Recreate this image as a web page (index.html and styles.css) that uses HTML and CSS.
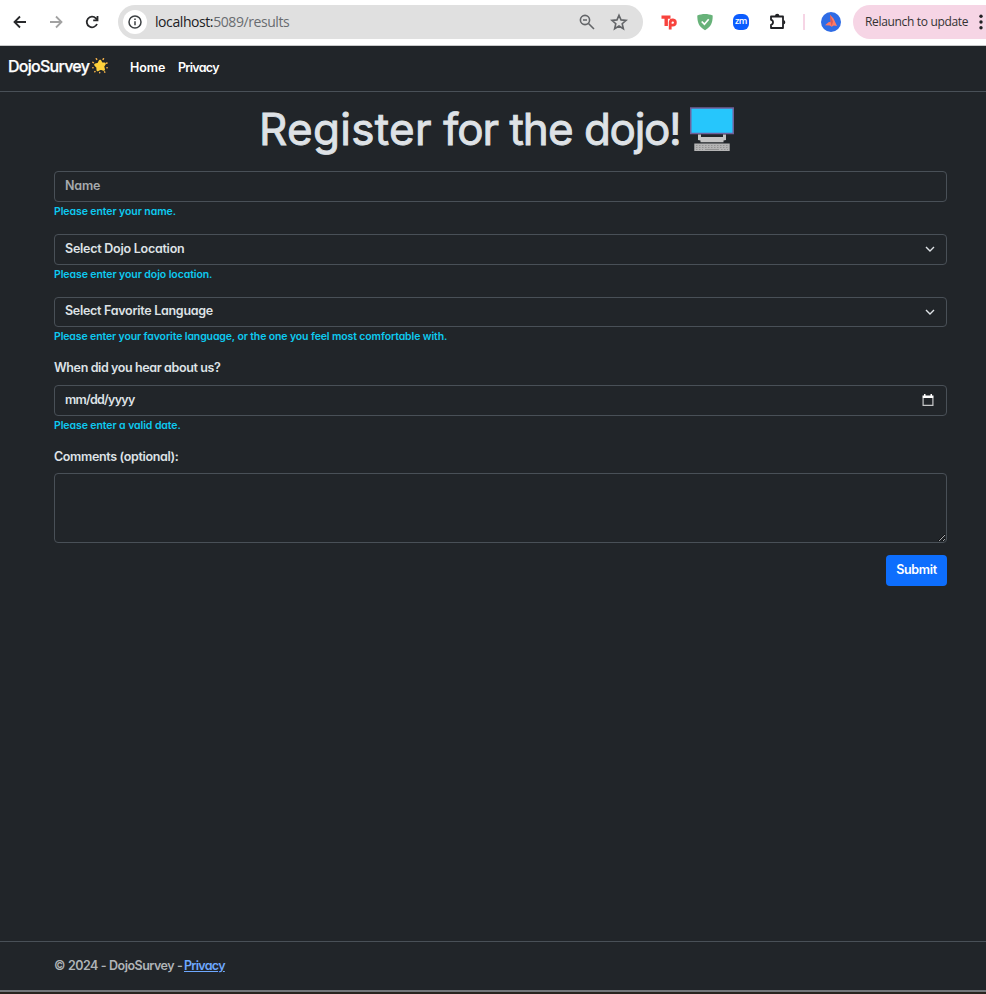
FILE: index.html
```html
<!DOCTYPE html>
<html lang="en">
<head>
<meta charset="utf-8">
<title>DojoSurvey</title>
<link rel="stylesheet" href="styles.css">
</head>
<body>
<div class="toolbar">
  <svg class="nav-icon" viewBox="0 0 20 20"><path d="M16 10H5M10 4.500 4.500 10l5.500 5.500"/></svg>
  <svg class="nav-icon muted" viewBox="0 0 20 20"><path d="M4 10h11M10 4.500 15.500 10 10 15.500"/></svg>
  <svg class="nav-icon" viewBox="0 0 20 20"><path d="M15 12a5.300 5.300 0 1 1-1.100-5.700L15.300 8M15.500 4v4.300h-4.300"/></svg>
  <div class="omnibox">
    <span class="info"><svg viewBox="0 0 16 16"><circle cx="8" cy="8" r="6"/><path d="M8 7.300v4M8 4.600v1.500"/></svg></span>
    <span class="url">localhost:<span>5089/results</span></span>
    <svg class="zoom" viewBox="0 0 18 18"><circle cx="7" cy="7" r="4.600"/><path d="M10.500 10.500 16 16M5 7h4"/></svg>
    <svg class="star" viewBox="0 0 18 18"><path d="m9 2.200 2 4.700 5.100.45-3.900 3.350 1.200 5L9 13l-4.400 2.700 1.200-5-3.900-3.350L7 6.900z"/></svg>
  </div>
  <div class="extensions">
    <svg viewBox="0 0 18 18"><path fill="#f8433d" d="M1.500 2.500h9v3.200H7.900V13H4.500V5.700h-3z"/><path fill="none" stroke="#f8433d" stroke-width="2.800" d="M10.200 16.500V9.200a2.600 2.600 0 1 1 2.600 3H10"/></svg>
    <svg viewBox="0 0 18 18"><path fill="#67b279" d="M9 1c2.700 0 5.200.5 7.700 1.500 0 6.500-1.200 11-7.700 14.700C2.500 13.500 1.300 9 1.300 2.500 3.800 1.500 6.300 1 9 1z"/><path fill="none" stroke="#fff" stroke-width="1.700" d="m5.700 8.500 2.700 2.700 4.300-5"/></svg>
    <span class="zm">zm</span>
    <svg class="puzzle" viewBox="0 0 18 18"><path fill="none" stroke="#202124" stroke-width="1.800" stroke-linejoin="round" d="M2 3.500h12V15H2v-3.200c2.700-.3 2.700-4.600 0-5z"/><path fill="#202124" d="M6 3a2.200 2.200 0 0 1 4.400 0zM14.500 7a2.300 2.300 0 0 1 0 4.500z"/></svg>
  </div>
  <span class="divider"></span>
  <svg class="avatar" viewBox="0 0 20 20"><circle cx="10" cy="10" r="10" fill="#2f6ce5"/><path fill="#ff7a66" d="m9 2.800 3.500 3.700L16 14l-3.300-.6-2 1.300-2-1.200-4.700-.2 3.500-3 2.300-.6z"/><path fill="#d95b58" d="m9 2.800 3 6.700-1.300 5-1-4z"/></svg>
  <div class="relaunch"><span>Relaunch to update</span><svg viewBox="0 0 4 16"><circle cx="2" cy="2.300" r="1.700"/><circle cx="2" cy="8" r="1.700"/><circle cx="2" cy="13.700" r="1.700"/></svg></div>
</div>
<header class="navbar">
  <a class="brand">DojoSurvey</a>
  <svg class="sun" viewBox="0 0 16 16"><path fill="#ffd23c" d="m8 3.500 1.500 2.700 3 .2-1.600 2.500.8 3.100-3-1.200-2.900 1.700-.2-3L3.500 7.300l3-.8z" stroke="#ffd23c" stroke-width="2.600" stroke-linejoin="round"/><path stroke="#f2b04b" stroke-width="1.500" stroke-linecap="round" d="m4.300 1.200.4.700M11.500 1.200l-.4.700M15 5.500l-.6.200M.8 4.800l.6.300M.8 10.200h.3M14.900 10.200h.3M12.600 14.400l.2.300M7.700 15v.2M3 14l-.2.200"/></svg>
  <a class="link home">Home</a>
  <a class="link privacy">Privacy</a>
</header>
<main>
  <div class="heading">
    <h1><span class="wide">Register</span> for the <span class="tight">dojo!</span></h1>
    <svg viewBox="0 0 44 46"><path fill="#26c6fc" stroke="#70609a" stroke-width="1.500" d="M.75 1h42.500v25.500H.75z"/><path fill="#c4c4c4" d="M8 27.500h3V30h22v-2.500h3V33l-2.500.5v1.800h-23v-1.800L8 33z"/><path fill="#b4b4b4" d="M4.300 36.500h35.400V44H4.300z"/><path stroke="#929292" stroke-width="1" stroke-dasharray="1.500 1.500" d="M6 38.500h32M6 40.500h32M6 42.500h7M31 42.500h7"/><path stroke="#929292" d="M15 42.500h14"/></svg>
  </div>
  <form>
    <div class="field"><div class="control placeholder"><span class="t-name">Name</span></div><small>Please enter your name.</small></div>
    <div class="field"><div class="control"><span class="t-loc">Select Dojo Location</span><svg class="chevron" viewBox="0 0 12 12"><path d="m2 4 4 4 4-4"/></svg></div><small>Please enter your dojo location.</small></div>
    <div class="field third"><div class="control short"><span class="t-lang">Select Favorite Language</span><svg class="chevron" viewBox="0 0 12 12"><path d="m2 4 4 4 4-4"/></svg></div><small class="h-lang">Please enter your favorite language, or the one you feel most comfortable with.</small></div>
    <label class="l-when"><span>When did you hear about us?</span></label>
    <div class="field"><div class="control"><span class="t-date">mm/dd/yyyy</span><svg class="calendar" viewBox="0 0 12 13"><path fill="#fff" d="M.5 1.500H2V0h1.500v1.500h5V0H10v1.500h1.500v2.500H.5z"/><path fill="none" stroke="#c5c6c7" stroke-width="1.200" d="M1.100 4v7.400h9.800V4"/></svg></div><small>Please enter a valid date.</small></div>
    <label class="l-comments"><span>Comments (optional):</span></label>
    <textarea aria-label="Comments"></textarea>
    <button type="button"><span>Submit</span></button>
  </form>
</main>
<footer><span class="copy">© 2024 - DojoSurvey -</span><a>Privacy</a></footer>
<div class="window-edge"></div>
</body>
</html>
```

FILE: styles.css
```css
* { box-sizing: border-box; }
body { margin: 0; height: 994px; overflow: hidden; display: flex; flex-direction: column; background: #212529; color: #dee2e6; font: 600 12.5px/20px Inter, "Liberation Sans", sans-serif; font-feature-settings: "cv11"; letter-spacing: -.35px; }
svg { display: block; flex: none; }
span, small, a, h1 { white-space: nowrap; }
.toolbar { flex: none; height: 46px; background: #fff; border-bottom: 1px solid #c9cacb; display: flex; align-items: center; padding: 0 0 2px 10px; font-family: "Open Sans", sans-serif; font-weight: 400; font-feature-settings: normal; }
.nav-icon { width: 20px; height: 20px; margin-right: 16px; fill: none; stroke: #28292b; stroke-width: 1.800; }
.nav-icon.muted { stroke: #a2a2a2; }
.omnibox { width: 525px; height: 34px; border-radius: 17px; background: #e0e0e0; display: flex; align-items: center; padding-left: 5px; }
.info { width: 24px; height: 24px; border-radius: 50%; background: #fff; display: grid; place-items: center; }
.info svg { width: 16px; height: 16px; fill: none; stroke: #3c4043; stroke-width: 1.500; }
.url { margin-left: 8px; width: 423px; color: #202124; font-size: 14px; letter-spacing: -.42px; }
.url span { color: #696c70; }
.zoom, .star { width: 18px; height: 18px; fill: none; stroke: #636568; stroke-width: 1.600; }
.star { margin-left: 14px; }
.extensions { display: flex; gap: 18px; margin-left: 17px; align-items: center; }
.extensions svg { width: 18px; height: 18px; }
.zm { width: 16px; height: 16px; border-radius: 6px; background: #0b5cff; color: #fff; font: 600 9px/14px "Open Sans", sans-serif; text-align: center; margin-left: 1px; }
.extensions .puzzle { margin-left: 2px; }
.divider { width: 2px; height: 16px; background: #f6d5e5; margin-left: 16px; }
.avatar { width: 20px; height: 20px; margin-left: 16px; }
.relaunch { margin-left: 12px; width: 133px; height: 34px; border-radius: 17px 0 0 17px; background: #f6d5e5; color: #333; display: flex; align-items: center; padding-left: 12px; font-size: 12px; letter-spacing: -.33px; }
.relaunch span { width: 114px; }
.relaunch svg { width: 4px; height: 16px; fill: #202124; }
.navbar { flex: none; height: 46px; border-bottom: 1px solid #495057; display: flex; padding: 10px 8px; color: #fff; }
.brand { width: 82px; font-size: 16px; line-height: 21px; font-weight: 500; letter-spacing: -.73px; -webkit-text-stroke: .25px #fff; }
.sun { width: 16px; height: 17px; margin: 1px 22px 0 2px; }
.link { line-height: 24px; }
.home { width: 48px; letter-spacing: -.1px; }
.privacy { letter-spacing: -.7px; }
main { flex: 1; padding: 0 39px 0 54px; }
.heading { height: 79px; display: flex; padding: 15px 0 0 206px; }
h1 { width: 430px; margin: -1px 0 0 -1px; font-size: 44px; line-height: 46px; font-weight: 400; letter-spacing: -1px; -webkit-text-stroke: .9px #dee2e6; stroke-linejoin: round; }
.wide { letter-spacing: .3px; }
.tight { letter-spacing: -1.3px; }
.heading svg { width: 44px; height: 46px; margin-left: 1px; }
form { display: flex; flex-direction: column; }
.field { height: 63px; display: flex; flex-direction: column; }
.field.third { height: 62px; }
.control { height: 31px; border: 1px solid #495057; border-radius: 4px; display: flex; justify-content: space-between; padding: 0 10px; line-height: 28px; }
.control.short { height: 30px; line-height: 26px; }
.placeholder { color: #a7abae; }
small { color: #0dcaf0; font-size: 10.5px; line-height: 20px; letter-spacing: -.08px; }
.h-lang { letter-spacing: -.12px; }
.t-name { letter-spacing: -.2px; }
.t-loc { letter-spacing: -.25px; }
.t-lang { letter-spacing: -.28px; }
.t-date { letter-spacing: -.75px; }
.l-when { letter-spacing: -.39px; }
.chevron { width: 12px; height: 12px; margin: 8px 0 0; fill: none; stroke: #dee2e6; stroke-width: 1.400; }
.calendar { width: 12px; height: 13px; margin: 8px 2px 0 0; }
label { height: 26px; line-height: 18px; }
.l-comments { height: 25px; }
textarea { display: block; width: 100%; height: 70px; margin: 0; background: #212529; border: 1px solid #495057; border-radius: 4px; color: #dee2e6; resize: vertical; color-scheme: dark; }
button { align-self: flex-end; width: 61px; height: 31px; padding: 0 0 1px; margin-top: 12px; border: 0; border-radius: 4px; background: #0d6efd; color: #fff; font: inherit; font-feature-settings: inherit; letter-spacing: inherit; }
footer { flex: none; height: 49px; border-top: 1px solid #495057; padding: 14px 54px; color: #b0b4b7; display: flex; }
.copy { width: 130px; letter-spacing: -.5px; word-spacing: .3px; }
footer a { color: #6ea8fe; text-decoration: underline; letter-spacing: -.7px; }
.window-edge { flex: none; height: 4px; border-top: 2px solid #73767a; background: #29251f; }
```
